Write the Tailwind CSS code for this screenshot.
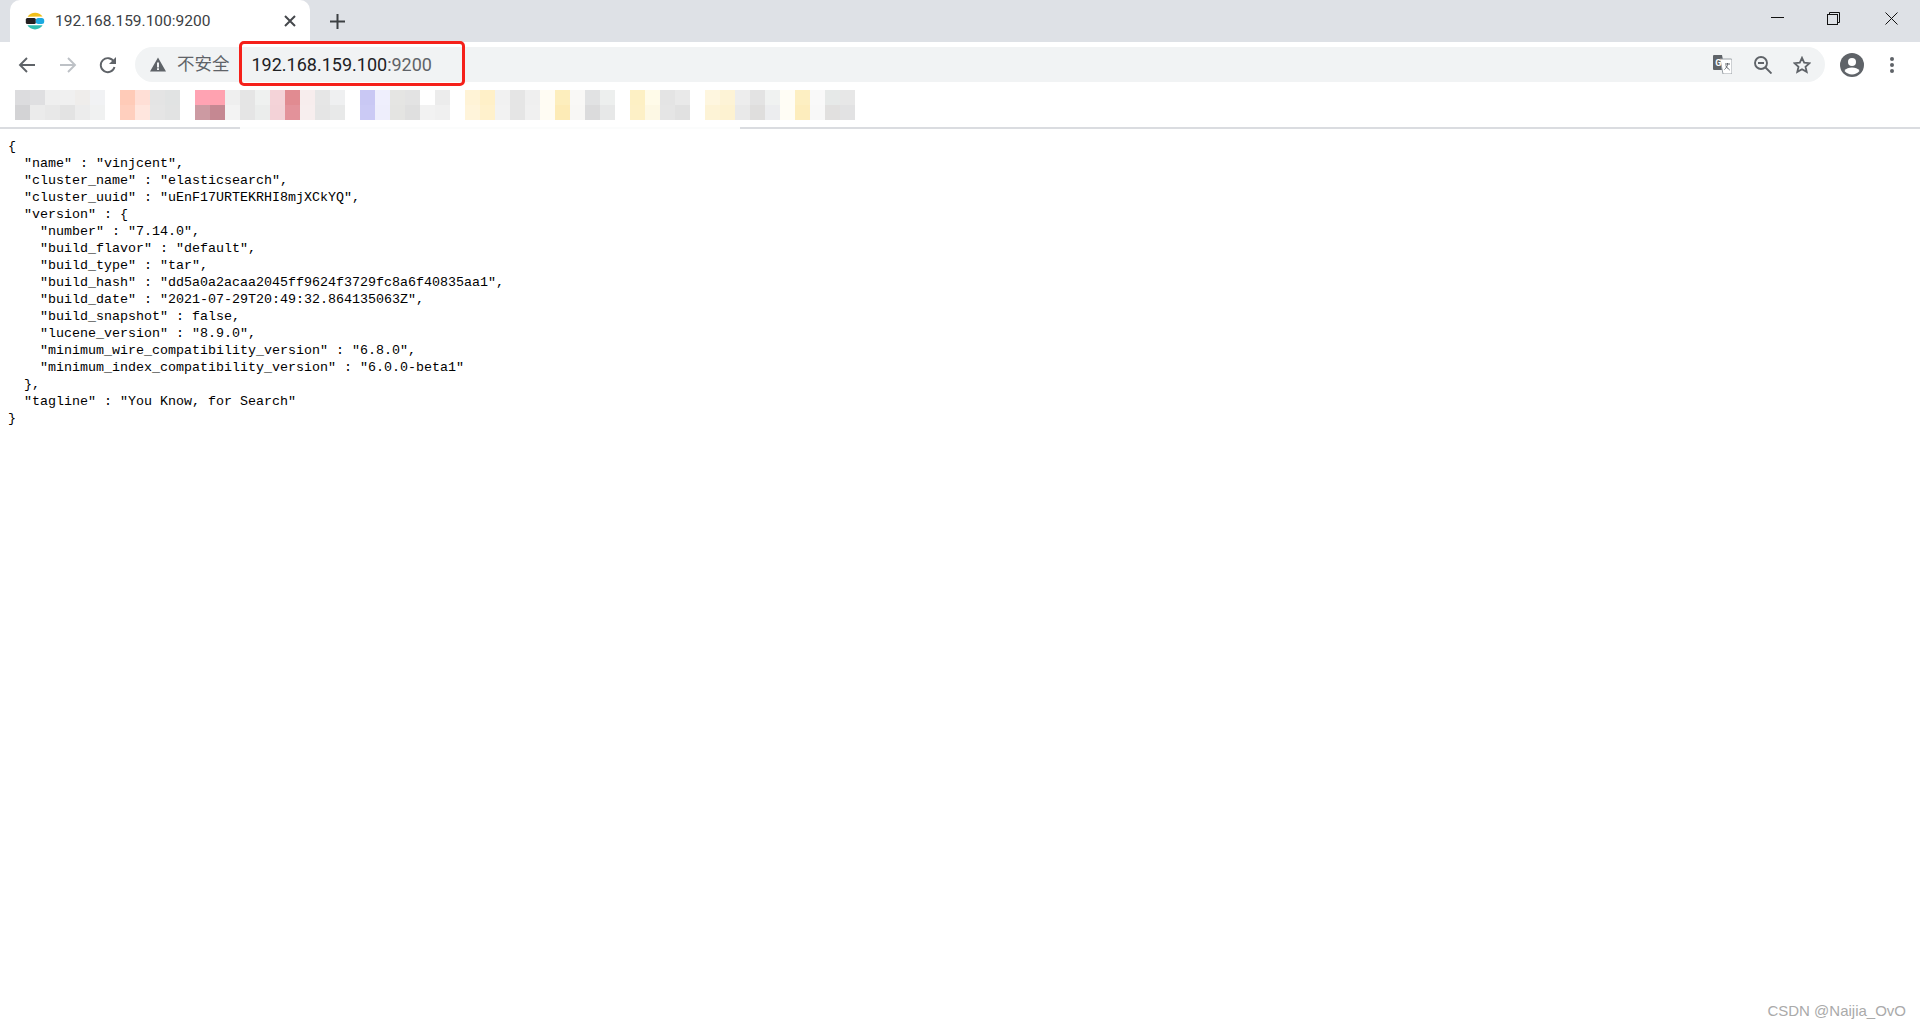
<!doctype html>
<html lang="zh">
<head>
<meta charset="utf-8">
<title>192.168.159.100:9200</title>
<script src="https://cdn.jsdelivr.net/npm/@tailwindcss/browser@4"></script>
</head>
<body class="relative h-[1029px] w-[1920px] overflow-hidden bg-white font-['Roboto','Noto_Sans_CJK_SC',sans-serif]">
<header class="flex h-[42px] items-end bg-[#dee1e6]">
  <div class="ml-[10px] flex h-[42px] w-[300px] items-center rounded-t-[10px] bg-white pl-[15px] pr-[14px]">
    <svg class="h-[20px] w-[20px] shrink-0" viewBox="0 0 20 20">
      <path d="M2.6 5.8A9 9 0 0 1 17.6 5.6Z" fill="#f0bf1a"/>
      <path d="M2.4 14.2A9 9 0 0 0 17.6 14.2Z" fill="#2fbdb0"/>
      <rect x="0.8" y="7" width="10" height="6" rx="1.5" fill="#231f20"/>
      <rect x="10.8" y="7" width="8.4" height="6" rx="2.5" fill="#1ba9e1"/>
    </svg>
    <span class="ml-[10px] pt-[2px] text-[15.5px] leading-none text-[#3c4043]">192.168.159.100:9200</span>
    <svg class="ml-auto h-[12px] w-[12px]" viewBox="0 0 12 12" fill="none" stroke="#45484c" stroke-width="2"><path d="M1 1l10 10M11 1L1 11"/></svg>
  </div>
  <svg class="mb-[13px] ml-[20px] h-[15px] w-[15px]" viewBox="0 0 15 15" fill="none" stroke="#3c4043" stroke-width="2"><path d="M7.5 0v15M0 7.500h15"/></svg>
  <div class="ml-auto flex h-[42px] w-[167px] items-start">
    <svg class="ml-[18px] mt-[17px] h-[1px] w-[13px]" viewBox="0 0 13 1"><path d="M0 .5h13" stroke="#111" /></svg>
    <svg class="ml-[43px] mt-[12px] h-[13px] w-[13px]" viewBox="0 0 13 13" fill="none" stroke="#111"><rect x=".5" y="2.5" width="10" height="10"/><path d="M2.5 2.5V.5h10v10h-2"/></svg>
    <svg class="ml-[45px] mt-[12px] h-[13px] w-[13px]" viewBox="0 0 13 13" fill="none" stroke="#111"><path d="M.5.5l12 12M12.5.5l-12 12"/></svg>
  </div>
</header>

<nav class="flex h-[45px] items-center bg-white">
  <svg class="ml-[18px] h-[18px] w-[18px]" viewBox="0 0 18 18" fill="none" stroke="#5f6368" stroke-width="1.9"><path d="M17 9H2M9 2L2 9l7 7"/></svg>
  <svg class="ml-[23px] h-[18px] w-[18px]" viewBox="0 0 18 18" fill="none" stroke="#bdc1c6" stroke-width="1.9"><path d="M1 9h15M9 2l7 7-7 7"/></svg>
  <svg class="ml-[22px] h-[18px] w-[18px]" viewBox="0 0 18 18" fill="none"><path d="M15.5 11a7 7 0 1 1-.6-5.2" stroke="#5f6368" stroke-width="1.9"/><path d="M17 1v7h-7z" fill="#5f6368"/></svg>
  <div class="ml-[18px] flex h-[35px] w-[1690px] items-center rounded-full bg-[#f1f3f4]">
    <svg class="ml-[15px] h-[15px] w-[16px]" viewBox="0 0 16 15"><path d="M8 .5L16 14.5H0ZM7 5.5v5h2v-5ZM7 11.2v1.8h2v-1.8Z" fill="#5f6368" fill-rule="evenodd"/></svg>
    <span class="ml-[11px] text-[17.5px] leading-none text-[#5f6368]">不安全</span>
    <span class="ml-[22px] text-[18px] leading-none text-[#202124]">192.168.159.100<span class="text-[#5f6368]">:9200</span></span>
    <svg class="ml-auto h-[19px] w-[19px]" viewBox="0 0 19 19"><path d="M1 0h8l3 15H1a1 1 0 0 1-1-1V1a1 1 0 0 1 1-1Z" fill="#5f6368"/><path d="M7 4h11a1 1 0 0 1 1 1v13a1 1 0 0 1-1 1H10Z" fill="#fff" stroke="#9aa0a6"/><path d="M12 9h5M14.5 8v1.5c-.3 2-1.6 3.8-3 5M12.7 10.5c.8 1.6 2.4 3.4 4 4.5" stroke="#5f6368" fill="none"/><text x="2.2" y="10.5" font-size="9" font-weight="700" fill="#fff" font-family="Roboto">G</text></svg>
    <svg class="ml-[22px] h-[18px] w-[18px]" viewBox="0 0 18 18" fill="none" stroke="#5f6368" stroke-width="1.9"><circle cx="7" cy="7" r="6"/><path d="M11.5 11.5l6 6M4 7h6"/></svg>
    <svg class="ml-[21px] h-[18px] w-[18px]" viewBox="0 0 18 18" fill="none" stroke="#5f6368" stroke-width="1.8"><path d="M9 1.800l2.2 4.900 5.300.5-4 3.500 1.200 5.200L9 13.200l-4.700 2.700 1.200-5.200-4-3.500 5.300-.5Z"/></svg>
    <span class="w-[14px]"></span>
  </div>
  <svg class="ml-[15px] h-[24px] w-[24px]" viewBox="0 0 24 24"><circle cx="12" cy="12" r="12" fill="#5f6368"/><circle cx="12" cy="9" r="4" fill="#fff"/><path d="M4.500 18c1.500-2.600 4.500-3.500 7.500-3.500s6 .9 7.500 3.500a10 10 0 0 1-15 0Z" fill="#fff"/></svg>
  <svg class="ml-[25px] h-[18px] w-[6px]" viewBox="0 0 6 18" fill="#5f6368"><circle cx="3" cy="3" r="2"/><circle cx="3" cy="9" r="2"/><circle cx="3" cy="15" r="2"/></svg>
</nav>

<div class="flex h-[42px] items-start border-b-2 border-[#dadce0] bg-white pl-[15px] pt-[3px]">
  <div class="grid grid-flow-col grid-rows-[15px_15px] auto-cols-[15px]">
    <div class="bg-[#dcdcde]"></div><div class="bg-[#d3d3d5]"></div>
    <div class="bg-[#dfdfe1]"></div><div class="bg-[#ebebeb]"></div>
    <div class="bg-[#efefef]"></div><div class="bg-[#e8e8e8]"></div>
    <div class="bg-[#f0f0f0]"></div><div class="bg-[#e3e3e3]"></div>
    <div class="bg-[#efedeb]"></div><div class="bg-[#ececec]"></div>
    <div class="bg-[#f1f2f4]"></div><div class="bg-[#f0f1f1]"></div>
    <div class="bg-white"></div><div class="bg-white"></div>
    <div class="bg-[#ffcbb8]"></div><div class="bg-[#ffcfbe]"></div>
    <div class="bg-[#ffdfd6]"></div><div class="bg-[#ffe6de]"></div>
    <div class="bg-[#e4e4e4]"></div><div class="bg-[#e5e5e5]"></div>
    <div class="bg-[#e1e3e3]"></div><div class="bg-[#e2e3e3]"></div>
    <div class="bg-white"></div><div class="bg-white"></div>
    <div class="bg-[#ffa3b3]"></div><div class="bg-[#cc9aa2]"></div>
    <div class="bg-[#ffa2b0]"></div><div class="bg-[#c58892]"></div>
    <div class="bg-[#efefef]"></div><div class="bg-[#f3f3f3]"></div>
    <div class="bg-[#e5e5e5]"></div><div class="bg-[#e5e5e5]"></div>
    <div class="bg-[#eff1f0]"></div><div class="bg-[#ebedec]"></div>
    <div class="bg-[#f4d3d8]"></div><div class="bg-[#f3d2d7]"></div>
    <div class="bg-[#e18b91]"></div><div class="bg-[#e3929a]"></div>
    <div class="bg-[#f7eded]"></div><div class="bg-[#f7eeee]"></div>
    <div class="bg-[#e6e6e6]"></div><div class="bg-[#e5e5e5]"></div>
    <div class="bg-[#eff0f1]"></div><div class="bg-[#e8e9e9]"></div>
    <div class="bg-white"></div><div class="bg-white"></div>
    <div class="bg-[#c9c8f4]"></div><div class="bg-[#cbcaf5]"></div>
    <div class="bg-[#efeffd]"></div><div class="bg-[#eeeefc]"></div>
    <div class="bg-[#e5e5e3]"></div><div class="bg-[#e4e4e2]"></div>
    <div class="bg-[#e3e3e3]"></div><div class="bg-[#dfdfdf]"></div>
    <div class="bg-white"></div><div class="bg-[#f2f2f2]"></div>
    <div class="bg-[#ececec]"></div><div class="bg-[#f0f0f0]"></div>
    <div class="bg-white"></div><div class="bg-white"></div>
    <div class="bg-[#fff3d6]"></div><div class="bg-[#fff4da]"></div>
    <div class="bg-[#fff0c8]"></div><div class="bg-[#fff1cc]"></div>
    <div class="bg-[#f1f1f1]"></div><div class="bg-[#f2f2f2]"></div>
    <div class="bg-[#e5e5e5]"></div><div class="bg-[#e5e5e5]"></div>
    <div class="bg-[#efefef]"></div><div class="bg-[#f0f0f0]"></div>
    <div class="bg-[#fffcf3]"></div><div class="bg-[#fffcf3]"></div>
    <div class="bg-[#fdeebd]"></div><div class="bg-[#fdebb6]"></div>
    <div class="bg-[#f9f8f6]"></div><div class="bg-[#f8f7f5]"></div>
    <div class="bg-[#e1e2e3]"></div><div class="bg-[#dbdbdc]"></div>
    <div class="bg-[#edefee]"></div><div class="bg-[#e7e8e8]"></div>
    <div class="bg-white"></div><div class="bg-white"></div>
    <div class="bg-[#fdf0c4]"></div><div class="bg-[#fdf0c6]"></div>
    <div class="bg-[#fffbe9]"></div><div class="bg-[#fdf8e4]"></div>
    <div class="bg-[#e4e4e4]"></div><div class="bg-[#e5e5e5]"></div>
    <div class="bg-[#e9e9e9]"></div><div class="bg-[#e1e1e1]"></div>
    <div class="bg-white"></div><div class="bg-white"></div>
    <div class="bg-[#fef6df]"></div><div class="bg-[#fdf3d6]"></div>
    <div class="bg-[#fdf3d6]"></div><div class="bg-[#fdf2d1]"></div>
    <div class="bg-[#ededed]"></div><div class="bg-[#e9e9e9]"></div>
    <div class="bg-[#e3e3e3]"></div><div class="bg-[#dfdedd]"></div>
    <div class="bg-[#f0f2f1]"></div><div class="bg-[#ecedef]"></div>
    <div class="bg-[#fffdf5]"></div><div class="bg-[#fffdf5]"></div>
    <div class="bg-[#fdefc2]"></div><div class="bg-[#fdedbd]"></div>
    <div class="bg-[#f9f9f9]"></div><div class="bg-[#f8f8f8]"></div>
    <div class="bg-[#e6e9e8]"></div><div class="bg-[#e1e0df]"></div>
    <div class="bg-[#e7e7e7]"></div><div class="bg-[#e2e2e3]"></div>
  </div>
</div>

<pre class="m-0 px-[8px] pt-[9px] font-['Liberation_Mono',monospace] text-[13.33px] leading-[17px] text-black">{
  "name" : "vinjcent",
  "cluster_name" : "elasticsearch",
  "cluster_uuid" : "uEnF17URTEKRHI8mjXCkYQ",
  "version" : {
    "number" : "7.14.0",
    "build_flavor" : "default",
    "build_type" : "tar",
    "build_hash" : "dd5a0a2acaa2045ff9624f3729fc8a6f40835aa1",
    "build_date" : "2021-07-29T20:49:32.864135063Z",
    "build_snapshot" : false,
    "lucene_version" : "8.9.0",
    "minimum_wire_compatibility_version" : "6.8.0",
    "minimum_index_compatibility_version" : "6.0.0-beta1"
  },
  "tagline" : "You Know, for Search"
}</pre>

<div class="absolute left-[240px] top-[126px] h-[5px] w-[500px] bg-white/90"></div>
<div class="absolute left-[239px] top-[41px] h-[45px] w-[226px] rounded-[5px] border-[3px] border-[#f5201a]"></div>
<div class="absolute right-[14px] top-[1002px] font-['Liberation_Sans',sans-serif] text-[15px] leading-[18px] text-[#aaaaaa]">CSDN @Naijia_OvO</div>
</body>
</html>
